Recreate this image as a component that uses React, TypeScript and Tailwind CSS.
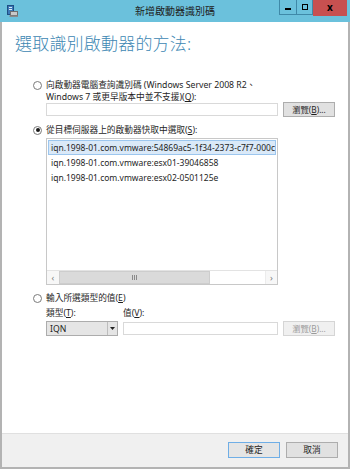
import React from "react";

function Radio({ checked }: { checked?: boolean }) {
  return (
    <div className="w-[9px] h-[9px] rounded-full border border-[#7a7a7a] bg-white flex items-center justify-center shrink-0 mt-[1.5px] mr-[4px]">
      {checked && <div className="w-[4px] h-[4px] rounded-full bg-[#1a1a1a]" />}
    </div>
  );
}

export default function App() {
  return (
    <div className="w-[350px] h-[471px] bg-white font-['Noto_Sans','Noto_Sans_CJK_TC',sans-serif] text-[8.7px] leading-[12px] text-[#1e1e1e]">
      <div className="h-[469px] flex flex-col">
        {/* title bar */}
        <div className="h-[22px] bg-[#6bc1dc] grid grid-cols-[1fr_auto_1fr] shrink-0">
          <div className="flex items-center pl-[7px]">
            <svg width="11" height="12" viewBox="0 0 11 12">
              <rect x="0.5" y="0.5" width="6" height="9" fill="#3b78b8" stroke="#1f4f85" strokeWidth="1" />
              <rect x="2" y="2" width="3" height="1" fill="#d8e8f6" />
              <rect x="2" y="4" width="3" height="1" fill="#d8e8f6" />
              <rect x="3.5" y="6.5" width="7" height="4" fill="#c9c9c9" stroke="#6e6e6e" strokeWidth="1" />
              <rect x="2.5" y="10.5" width="8.5" height="1.5" fill="#8a8a8a" />
            </svg>
          </div>
          <div className="flex items-center justify-center text-[10px] text-[#202020] pb-[1px]">新增啟動器識別碼</div>
          <div className="flex justify-end items-start pr-[3px]">
            <div className="w-[18px] h-[15px] border-x border-b border-[#3f89a8] flex items-center justify-center">
              <div className="w-[6px] h-[2px] bg-black mt-[3px]" />
            </div>
            <div className="w-[16px] h-[15px] border-r border-b border-[#3f89a8] flex items-center justify-center">
              <div className="w-[6px] h-[6px] border-[1.5px] border-black mb-[1px]" />
            </div>
            <div className="w-[34px] h-[16px] bg-[#c75050] flex items-center justify-center text-[10px] font-bold text-black leading-none pb-[2px]">x</div>
          </div>
        </div>

        {/* body */}
        <div className="flex-1 flex flex-col border-x-2 border-b-2 border-[#b3b3b3] bg-white">
          <div className="flex-1 flex flex-col pl-[13px]">
            <div className="mt-[11px] text-[17px] leading-[22px] text-[#3d87b3] font-light tracking-[0.2px]">選取識別啟動器的方法:</div>

            <div className="ml-[18px] mt-[24px] flex">
              <Radio />
              <div className="leading-[12px]">
                <div>向啟動器電腦查詢識別碼 (Windows Server 2008 R2、</div>
                <div>Windows 7 或更早版本中並不支援)(<u>Q</u>):</div>
              </div>
            </div>
            <div className="ml-[31px] mt-[-1px] flex items-center h-[15px]">
              <div className="w-[232px] h-[13px] border border-[#d9d9d9] bg-white" />
              <div className="w-[52px] h-[15px] ml-[5px] border border-[#adadad] bg-[#e1e1e1] flex items-center justify-center text-[8.3px]">瀏覽(<u>B</u>)...</div>
            </div>

            <div className="ml-[18px] mt-[7px] flex">
              <Radio checked />
              <div>從目標伺服器上的啟動器快取中選取(<u>S</u>):</div>
            </div>
            <div className="ml-[31px] mt-[2px] w-[232px] h-[147px] border border-[#c8c8c8] flex flex-col bg-white">
              <div className="flex-1 flex flex-col pt-[1px] overflow-hidden text-[8.5px]">
                <div className="h-[15px] mx-[1px] bg-[#dae9f8] border border-[#9cc6ee] flex items-center pl-[2px] whitespace-nowrap overflow-hidden">iqn.1998-01.com.vmware:54869ac5-1f34-2373-c7f7-000c29ab1234</div>
                <div className="h-[15.5px] mx-[1px] flex items-center pl-[3px] whitespace-nowrap">iqn.1998-01.com.vmware:esx01-39046858</div>
                <div className="h-[15.5px] mx-[1px] flex items-center pl-[3px] whitespace-nowrap">iqn.1998-01.com.vmware:esx02-0501125e</div>
              </div>
              <div className="h-[14px] flex border-t border-[#e3e3e3] bg-[#f7f7f7]">
                <div className="w-[12px] flex items-center justify-center text-[9px] text-[#7a7a7a] leading-none">‹</div>
                <div className="w-[151px] bg-[#dadada] border border-[#cdcdcd] flex items-center justify-center">
                  <svg width="6" height="5" viewBox="0 0 6 5">
                    <rect x="0" y="0" width="1" height="5" fill="#8a8a8a" />
                    <rect x="2" y="0" width="1" height="5" fill="#8a8a8a" />
                    <rect x="4" y="0" width="1" height="5" fill="#8a8a8a" />
                  </svg>
                </div>
                <div className="flex-1 bg-white" />
                <div className="w-[12px] flex items-center justify-center text-[9px] text-[#7a7a7a] leading-none border-l border-[#ececec]">›</div>
              </div>
            </div>

            <div className="ml-[18px] mt-[7px] flex">
              <Radio />
              <div>輸入所選類型的值(<u>E</u>)</div>
            </div>
            <div className="ml-[31px] mt-[3px] flex">
              <div className="w-[77px]">類型(<u>T</u>):</div>
              <div>值(<u>V</u>):</div>
            </div>
            <div className="ml-[31px] mt-[2px] flex items-center h-[15px]">
              <div className="w-[72px] h-[15px] border border-[#acacac] bg-[#e5e5e5] flex">
                <div className="flex-1 pl-[3px] flex items-center">IQN</div>
                <div className="w-[10px] border-l border-[#bdbdbd] flex items-center justify-center">
                  <svg width="5" height="3" viewBox="0 0 5 3">
                    <polygon points="0,0 5,0 2.5,3" fill="#222" />
                  </svg>
                </div>
              </div>
              <div className="w-[155px] h-[13px] ml-[5px] border border-[#d9d9d9] bg-white" />
              <div className="w-[52px] h-[15px] ml-[5px] border border-[#d5d5d5] bg-[#f0f0f0] flex items-center justify-center text-[8.3px] text-[#9a9a9a]">瀏覽(<u>B</u>)...</div>
            </div>
          </div>

          {/* footer */}
          <div className="h-[34px] shrink-0 bg-[#f0f0f0] border-t border-[#e0e0e0] flex justify-end items-start pt-[8px] pr-[10px]">
            <div className="w-[52px] h-[16px] border border-[#6faee6] bg-[#e5e5e5] flex items-center justify-center">確定</div>
            <div className="w-[52px] h-[16px] ml-[6px] border border-[#adadad] bg-[#e1e1e1] flex items-center justify-center">取消</div>
          </div>
        </div>
      </div>
    </div>
  );
}
